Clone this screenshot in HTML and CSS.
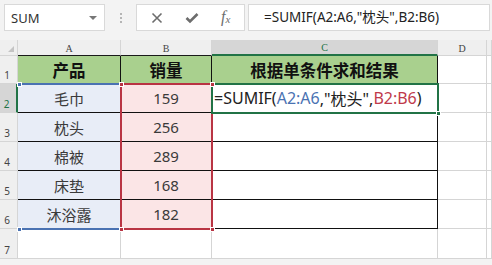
FILE: index.html
```html
<!DOCTYPE html>
<html lang="zh">
<head>
  <meta charset="UTF-8">
  <title>SUMIF</title>
  <link rel="stylesheet" href="styles.css">
</head>
<body>

<div class="toolbar">
  <div class="namebox">
    <span>SUM</span>
    <span class="caret"></span>
  </div>
  <div class="grip"><i></i><i></i><i></i></div>
  <div class="buttons">
    <svg width="12" height="12" viewBox="0 0 12 12"><path d="M1.5 1.5 L10.5 10.5 M10.5 1.5 L1.5 10.5" stroke="#6d6d6d" stroke-width="1.6" fill="none"/></svg>
    <svg width="14" height="12" viewBox="0 0 14 12"><path d="M1.5 6 L5 9.5 L12.5 2" stroke="#6d6d6d" stroke-width="2.6" fill="none"/></svg>
    <span class="fx">f<sub>x</sub></span>
  </div>
  <div class="formula">=SUMIF(A2:A6,"枕头",B2:B6)</div>
</div>

<div class="sheet">
  <!-- column headers -->
  <div class="corner"><span class="tri"></span></div>
  <div class="ch top">A</div>
  <div class="ch top">B</div>
  <div class="ch top sel">C</div>
  <div class="ch">D</div>
  <div class="ch"></div>

  <!-- row 1 -->
  <div class="rh">1</div>
  <div class="c t head">产品</div>
  <div class="c t head">销量</div>
  <div class="c t head">根据单条件求和结果</div>
  <div class="c"></div>
  <div class="c"></div>

  <!-- row 2 -->
  <div class="rh sel">2</div>
  <div class="c t a">毛巾</div>
  <div class="c t b">159</div>
  <div class="c t f">=SUMIF(<span class="blue">A2:A6</span>,"枕头",<span class="red">B2:B6</span>)</div>
  <div class="c"></div>
  <div class="c"></div>

  <!-- row 3 -->
  <div class="rh">3</div>
  <div class="c t a">枕头</div>
  <div class="c t b">256</div>
  <div class="c t"></div>
  <div class="c"></div>
  <div class="c"></div>

  <!-- row 4 -->
  <div class="rh">4</div>
  <div class="c t a">棉被</div>
  <div class="c t b">289</div>
  <div class="c t"></div>
  <div class="c"></div>
  <div class="c"></div>

  <!-- row 5 -->
  <div class="rh">5</div>
  <div class="c t a">床垫</div>
  <div class="c t b">168</div>
  <div class="c t"></div>
  <div class="c"></div>
  <div class="c"></div>

  <!-- row 6 -->
  <div class="rh">6</div>
  <div class="c t a">沐浴露</div>
  <div class="c t b">182</div>
  <div class="c t"></div>
  <div class="c"></div>
  <div class="c"></div>

  <!-- row 7 -->
  <div class="rh">7</div>
  <div class="c"></div>
  <div class="c"></div>
  <div class="c"></div>
  <div class="c"></div>
  <div class="c"></div>

  <!-- range highlights over the grid -->
  <div class="range-a top-line"></div>
  <div class="range-a bottom-line"></div>
  <div class="range-b"></div>
  <div class="active"></div>
  <div class="hdl blue" style="left:17px; top:42px"></div>
  <div class="hdl blue" style="left:17px; top:187px"></div>
  <div class="hdl red" style="left:119px; top:42px"></div>
  <div class="hdl red" style="left:210px; top:42px"></div>
  <div class="hdl red" style="left:119px; top:187px"></div>
  <div class="hdl red" style="left:210px; top:187px"></div>
  <div class="hdl green" style="left:436px; top:71px"></div>
</div>

</body>
</html>
```

FILE: styles.css
```css
body {
  margin: 0;
  width: 492px;
  height: 265px;
  overflow: hidden;
  background: #f3f3f3;
  font-family: 'Noto Sans', 'Noto Sans CJK SC', sans-serif;
}

/* formula bar */
.toolbar {
  display: flex;
  align-items: flex-start;
  height: 40px;
  box-sizing: border-box;
  padding: 4px 2px 0 4px;
}

.namebox {
  width: 101px;
  height: 27px;
  box-sizing: border-box;
  background: #fff;
  border: 1px solid #d9d9d9;
  display: flex;
  align-items: center;
  justify-content: space-between;
  padding: 0 7px 0 6px;
  font-size: 13px;
  color: #333;
}

.caret {
  width: 0;
  height: 0;
  border-left: 4px solid transparent;
  border-right: 4px solid transparent;
  border-top: 4px solid #777;
}

.grip {
  width: 31px;
  height: 27px;
  display: flex;
  flex-direction: column;
  align-items: center;
  justify-content: center;
  gap: 2px;
}

.grip i {
  width: 2px;
  height: 2px;
  background: #b5b5b5;
}

.buttons {
  width: 109px;
  height: 27px;
  box-sizing: border-box;
  background: #fff;
  border: 1px solid #d9d9d9;
  display: flex;
  align-items: center;
  padding-left: 14px;
  gap: 22px;
}

.fx {
  font-family: 'Liberation Serif', serif;
  font-style: italic;
  font-size: 16px;
  line-height: 16px;
  color: #6d6d6d;
}

.fx sub {
  font-size: 11px;
  vertical-align: -1px;
}

.formula {
  flex: 1;
  height: 27px;
  box-sizing: border-box;
  margin-left: 3px;
  background: #fff;
  border: 1px solid #d9d9d9;
  padding-left: 15px;
  font-size: 13.5px;
  line-height: 25px;
  color: #222;
}

/* the sheet */
.sheet {
  position: relative;
  display: grid;
  grid-template-columns: 18px 103px 91px 226px 49px 5px;
  grid-template-rows: 16px 28px 29px 29px 29px 29px 29px 30px;
  background: #fff;
}

.corner,
.ch,
.rh {
  background: #efefef;
  border-right: 1px solid #d5d5d5;
  border-bottom: 1px solid #d5d5d5;
  box-sizing: border-box;
  color: #444;
  font-family: 'Liberation Serif', serif;
  font-size: 10px;
}

.corner {
  position: relative;
}

.tri {
  position: absolute;
  right: 3px;
  bottom: 3px;
  width: 0;
  height: 0;
  border-left: 6px solid transparent;
  border-bottom: 6px solid #c4c4c4;
}

.ch {
  display: flex;
  align-items: center;
  justify-content: center;
  padding-top: 1px;
}

.ch.top {
  border-bottom-color: #1a1a1a;
}

.ch.sel {
  background: #d6d6d6;
  color: #217346;
  border-bottom: 2px solid #217346;
}

.rh {
  display: flex;
  align-items: flex-end;
  justify-content: center;
  padding-bottom: 1px;
  padding-right: 3px;
  font-family: 'Noto Sans', sans-serif;
}

.rh.sel {
  background: #d6d6d6;
  color: #217346;
  border-right: 2px solid #217346;
}

.c {
  border-right: 1px solid #d5d5d5;
  border-bottom: 1px solid #d5d5d5;
  box-sizing: border-box;
  display: flex;
  align-items: center;
  justify-content: center;
  font-size: 15px;
  color: #3a3a3a;
  white-space: nowrap;
}

.c.t {
  border-right-color: #111;
  border-bottom-color: #111;
}

.head {
  background: #a9d08e;
  font-weight: bold;
  font-size: 16.5px;
  color: #111;
}

.a {
  background: #e8edf7;
}

.b {
  background: #fbe5e6;
}

.f {
  justify-content: flex-start;
  padding-left: 2px;
  font-size: 16px;
  color: #222;
  overflow: hidden;
}

.blue {
  color: #4a72b2;
}

.red {
  color: #c0394b;
}

/* range outlines */
.range-a {
  position: absolute;
  left: 19px;
  width: 102px;
  height: 2px;
  background: #4a72b2;
}

.top-line {
  top: 43px;
}

.bottom-line {
  top: 188px;
}

.range-b {
  position: absolute;
  left: 120px;
  top: 43px;
  width: 93px;
  height: 147px;
  box-sizing: border-box;
  border: 2px solid #b93443;
}

.active {
  position: absolute;
  left: 211px;
  top: 43px;
  width: 228px;
  height: 31px;
  box-sizing: border-box;
  border: 2px solid #217346;
}

.hdl {
  position: absolute;
  width: 5px;
  height: 5px;
  box-sizing: border-box;
  border: 1px solid #fff;
}

.hdl.blue {
  background: #4a72b2;
}

.hdl.red {
  background: #b93443;
}

.hdl.green {
  background: #217346;
}
```
